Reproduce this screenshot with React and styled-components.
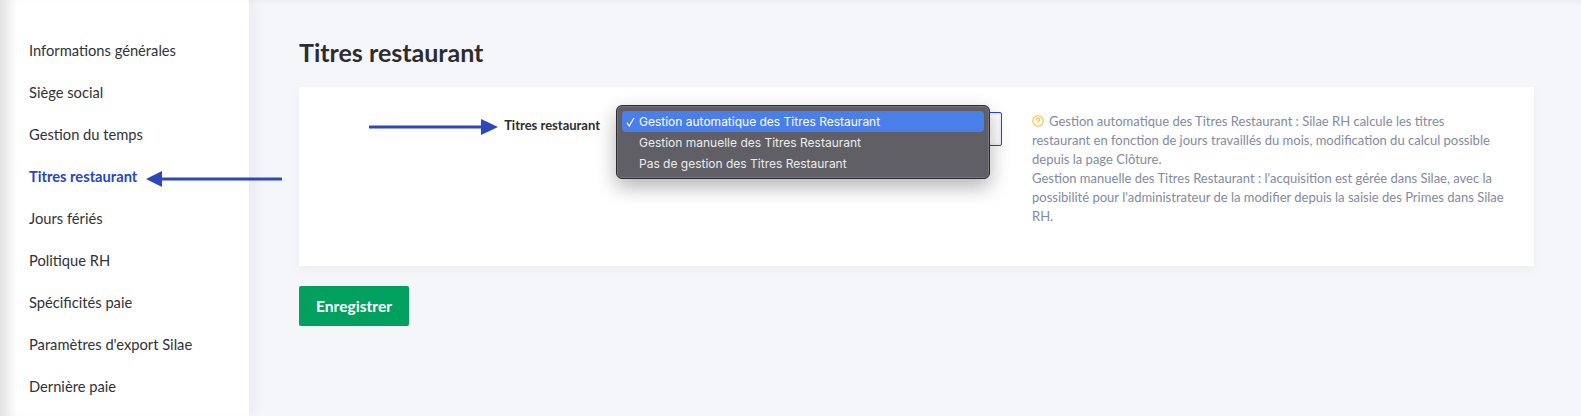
import React from "react";
import styled, { createGlobalStyle } from "styled-components";

const Global = createGlobalStyle`
  html, body { margin: 0; padding: 0; height: 100%; background: #f5f6fa; overflow: hidden; }
  body { font-family: "Lato", "Liberation Sans", sans-serif; }
`;
const Page = styled.div`
  position: relative;
  display: flex;
  width: 1581px;
  height: 416px;
  overflow: hidden;
  background: #f5f6fa;
  &::after {
    content: "";
    position: absolute;
    inset: 0;
    pointer-events: none;
    box-shadow: inset 0 6px 6px -5px rgba(0,0,0,.05);
  }
`;
const Sidebar = styled.nav`
  width: 249px;
  flex: none;
  box-sizing: border-box;
  padding: 29px 0 0 29px;
  background: #fff;
  box-shadow: inset 16px 0 12px -8px rgba(0,0,0,.12), 4px 0 14px rgba(20,30,70,.06);
  z-index: 1;
`;
const NavItem = styled.div`
  height: 42px;
  display: flex;
  align-items: center;
  font-size: 14.7px;
  font-weight: ${(p) => (p.$active ? 700 : 400)};
  color: ${(p) => (p.$active ? "#2846bd" : "#303236")};
`;
const Main = styled.main`
  flex: 1;
  padding: 36px 47px 0 50px;
  min-width: 0;
`;
const Title = styled.h1`
  margin: 0 0 18px;
  height: 33px;
  line-height: 33px;
  font-size: 25px;
  font-weight: 700;
  color: #2b2d30;
`;
const Card = styled.section`
  display: flex;
  align-items: flex-start;
  height: 179px;
  box-sizing: border-box;
  padding: 25px 30px 0 0;
  background: #fff;
  box-shadow: 0 4px 12px rgba(30,40,90,.04);
`;
const Label = styled.label`
  width: 301px;
  flex: none;
  font-size: 13px;
  font-weight: 700;
  line-height: 16px;
  margin-top: 5px;
  text-align: right;
  color: #2b2d30;
`;
const SelectWrap = styled.div`
  position: relative;
  width: 386px;
  height: 34px;
  margin-left: 16px;
  flex: none;
`;
const SelectBox = styled.div`
  height: 100%;
  box-sizing: border-box;
  border: 1px solid #2f49b8;
  border-radius: 2px;
  background: #fff;
  box-shadow: inset 0 0 3px rgba(47,73,184,.25);
`;
const Popup = styled.div`
  position: absolute;
  left: 0;
  top: -7px;
  width: 374px;
  height: 74px;
  box-sizing: border-box;
  padding: 5px;
  background: #605f66;
  border: 1px solid #2c2c2e;
  border-radius: 6px;
  box-shadow: 0 8px 20px rgba(0,0,0,.3), inset 0 0 0 1px rgba(255,255,255,.14);
  font-family: "Inter", "Liberation Sans", sans-serif;
  font-size: 12px;
`;
const Option = styled.div`
  position: relative;
  height: 21px;
  line-height: 22px;
  padding-left: 17px;
  border-radius: 4px;
  color: ${(p) => (p.$selected ? "#fff" : "#ececec")};
  background: ${(p) => (p.$selected ? "#4a7ee8" : "transparent")};
`;
const Check = styled.svg`
  position: absolute;
  left: 4px;
  top: 6px;
  width: 9px;
  height: 10px;
`;
const Help = styled.div`
  margin-left: 30px;
  flex: 1;
  font-size: 13px;
  line-height: 19px;
  color: #838aa0;
`;
const HelpIcon = styled.svg`
  width: 12px;
  height: 12px;
  vertical-align: -1px;
  margin-right: 5px;
`;
const SaveButton = styled.button`
  display: block;
  margin-top: 20px;
  width: 110px;
  height: 40px;
  border: 0;
  border-radius: 2px;
  background: #02a05e;
  color: #fff;
  font-family: inherit;
  font-size: 15.6px;
  font-weight: 700;
`;
const Arrow = styled.svg`
  position: absolute;
  z-index: 2;
  left: ${(p) => p.$x}px;
  top: ${(p) => p.$y}px;
`;

const items = [
  "Informations générales",
  "Siège social",
  "Gestion du temps",
  "Titres restaurant",
  "Jours fériés",
  "Politique RH",
  "Spécificités paie",
  "Paramètres d'export Silae",
  "Dernière paie",
];

export default function App() {
  return (
    <Page>
      <Global />
      <Sidebar>
        {items.map((t) => (
          <NavItem key={t} $active={t === "Titres restaurant"}>{t}</NavItem>
        ))}
      </Sidebar>
      <Main>
        <Title>Titres restaurant</Title>
        <Card>
          <Label>Titres restaurant</Label>
          <SelectWrap>
            <SelectBox />
            <Popup>
              <Option $selected>
                <Check viewBox="0 0 9 10" fill="none" stroke="#fff" strokeWidth="1.2">
                  <path d="M1 5.6 3.2 9 8 1" />
                </Check>
                Gestion automatique des Titres Restaurant
              </Option>
              <Option>Gestion manuelle des Titres Restaurant</Option>
              <Option>Pas de gestion des Titres Restaurant</Option>
            </Popup>
          </SelectWrap>
          <Help>
            <HelpIcon viewBox="0 0 12 12" fill="none" stroke="#f2c230" strokeWidth="1.1">
              <circle cx="6" cy="6" r="5.2" />
              <path d="M4.4 4.7a1.6 1.6 0 1 1 2.4 1.4c-.5.3-.8.6-.8 1.1" strokeLinecap="round" />
              <circle cx="6" cy="9" r=".4" fill="#f2c230" stroke="none" />
            </HelpIcon>
            Gestion automatique des Titres Restaurant : Silae RH calcule les titres restaurant en fonction de jours travaillés du mois, modification du calcul possible depuis la page Clôture.
            <br />
            Gestion manuelle des Titres Restaurant : l'acquisition est gérée dans Silae, avec la possibilité pour l'administrateur de la modifier depuis la saisie des Primes dans Silae RH.
          </Help>
        </Card>
        <SaveButton>Enregistrer</SaveButton>
      </Main>
      <Arrow $x={145} $y={170} width="137" height="18" viewBox="0 0 137 18">
        <path d="M136 9H14" stroke="#2c48bb" strokeWidth="3" strokeLinecap="round" />
        <path d="M1 9 17 1v16z" fill="#2c48bb" />
      </Arrow>
      <Arrow $x={369} $y={118} width="130" height="18" viewBox="0 0 130 18">
        <path d="M1 9H115" stroke="#2c48bb" strokeWidth="3" strokeLinecap="round" />
        <path d="M129 9 112 1v16z" fill="#2c48bb" />
      </Arrow>
    </Page>
  );
}
